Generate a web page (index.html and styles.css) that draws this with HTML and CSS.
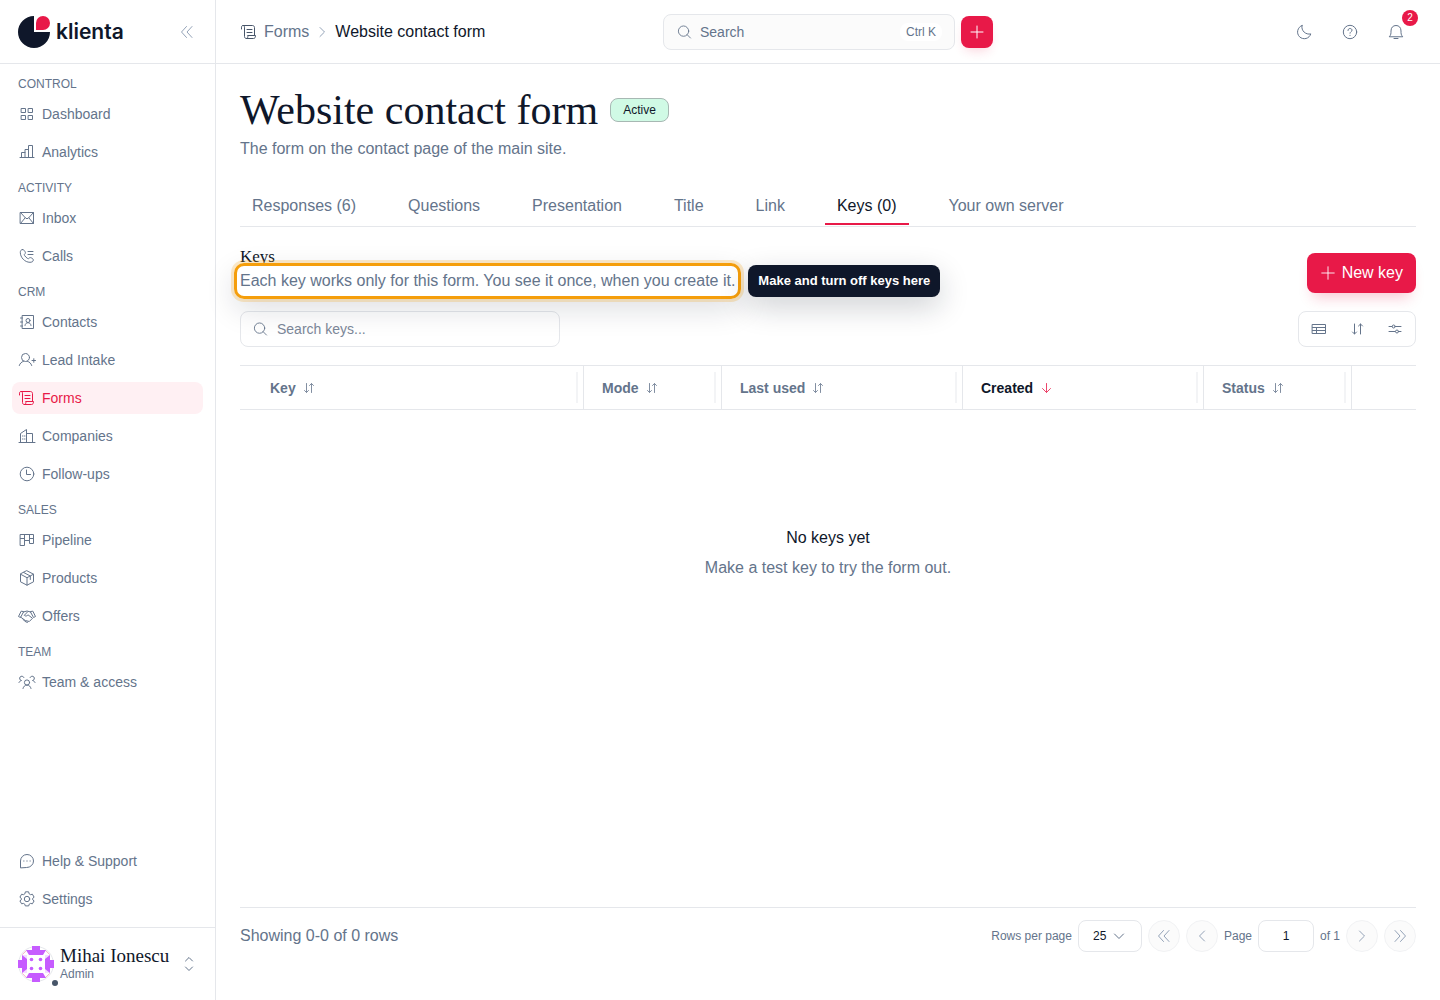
FILE: index.html
```html
<!DOCTYPE html>
<html lang="en">
<head>
<meta charset="utf-8">
<meta name="viewport" content="width=device-width, initial-scale=1">
<title>Website contact form - Klienta</title>
<link rel="stylesheet" href="styles.css">
</head>
<body>
<div class="app">
  <aside class="sidebar">
    <div class="brand">
      <a class="brand-link" href="#">
        <svg class="brand-mark" viewBox="0 0 32 32" aria-hidden="true"><path d="M16 0A16 16 0 1 0 32 16H16Z" fill="#0f172a"/><path d="M18 14V7a7 7 0 1 1 7 7Z" fill="#e81948"/></svg>
        <span class="brand-name">klienta</span>
      </a>
      <button class="icon-button collapse" type="button" aria-label="Collapse sidebar"><svg class="icon" viewBox="0 0 18 18"><path d="M8.500 3.500 3.500 9l5 5.500M14 3.500 9 9l5 5.500"/></svg></button>
    </div>
    <nav class="nav" aria-label="Main">
      <div class="nav-group">
        <h2 class="nav-label">CONTROL</h2>
        <a class="nav-item" href="#"><svg class="icon" viewBox="0 0 18 18"><path d="M3.500 3.500h4v4h-4zM10.500 3.500h4v4h-4zM3.500 10.500h4v4h-4zM10.500 10.500h4v4h-4z"/></svg>Dashboard</a>
        <a class="nav-item" href="#"><svg class="icon" viewBox="0 0 18 18"><path d="M2 14.500h14M3.500 14.500v-5H7M7 14.500V6.500h3.500M10.500 14.500v-12h4v12"/></svg>Analytics</a>
      </div>
      <div class="nav-group">
        <h2 class="nav-label">ACTIVITY</h2>
        <a class="nav-item" href="#"><svg class="icon" viewBox="0 0 18 18"><path d="M2.500 3.500h13v11h-13zM2.500 3.500 7.500 9q1.500 1.500 3 0l5-5.500M2.500 14.500 7 9M15.500 14.500 11 9"/></svg>Inbox</a>
        <a class="nav-item" href="#"><svg class="icon" viewBox="0 0 18 18"><path d="M4.500 2.500C3 2.500 2.300 4 2.300 5.300c0 5.200 4.500 10 9.700 10 1.600 0 3.300-.6 3.300-2.200 0-1.500-1.600-2.200-2.800-2.500-1-.2-1.300.8-2.100 1.100C9.500 12 6 8.500 6.300 7.600c.3-.8 1.300-1 1.100-2C7.100 4.300 6 2.500 4.500 2.500ZM10 4.500h5M10 7.500h5"/></svg>Calls</a>
      </div>
      <div class="nav-group">
        <h2 class="nav-label">CRM</h2>
        <a class="nav-item" href="#"><svg class="icon" viewBox="0 0 18 18"><path d="M4.500 2.500h11v13h-11zM2.500 5h2M2.500 9h2M2.500 13h2"/><circle cx="10" cy="7.500" r="2"/><path d="M7 12.500c.2-1.700 1.300-2.800 3-2.800s2.800 1.100 3 2.800"/></svg>Contacts</a>
        <a class="nav-item" href="#"><svg class="icon" viewBox="0 0 18 18"><circle cx="7.500" cy="6.500" r="4"/><path d="M1.300 14.500c.7-2.300 2.200-3.500 4.200-4.200M9.500 10.300c2 .7 3.500 1.900 4.200 4.200M14 9.500h3.500M15.800 7.700v3.600"/></svg>Lead Intake</a>
        <a class="nav-item is-active" href="#" aria-current="page"><svg class="icon" viewBox="0 0 18 18"><path d="M1.500 6V4.200c0-2.300 3-2.300 3 0v9.300c0 1.300.7 2 1.800 2M3 2.500h9.500c1 0 2 .8 2 2v8M8 12.500h7.500c0 2-.7 3-2 3H6.300c1.200 0 1.700-1.200 1.700-3M7 6.500h5M7 9.500h5"/></svg>Forms</a>
        <a class="nav-item" href="#"><svg class="icon" viewBox="0 0 18 18"><path d="M1 15.500h16M2.500 15.500v-9l6-4v13M8.500 6.500h6v9M4.500 9h.5M4.500 12h.5M6.500 9H7M6.500 12H7"/></svg>Companies</a>
        <a class="nav-item" href="#"><svg class="icon" viewBox="0 0 18 18"><circle cx="9" cy="9" r="6.800"/><path d="M8.500 5v4.500h4"/></svg>Follow-ups</a>
      </div>
      <div class="nav-group">
        <h2 class="nav-label">SALES</h2>
        <a class="nav-item" href="#"><svg class="icon" viewBox="0 0 18 18"><path d="M2.500 3.500h13v9h-4v-3h-5v5h-4zM6.500 3.500v6M11.500 3.500v6M2.500 7.500h4M11.500 7.500h4"/></svg>Pipeline</a>
        <a class="nav-item" href="#"><svg class="icon" viewBox="0 0 18 18"><path d="m9 1.800 6.500 3.400v7.600L9 16.200l-6.500-3.400V5.200ZM2.500 5.200 9 8.700l6.500-3.500M9 8.700v7.500M5.700 3.500l6.600 3.500v3.500"/></svg>Products</a>
        <a class="nav-item" href="#"><svg class="icon" viewBox="0 0 18 18"><path d="M3 4.500.5 9.500l2 1 3-5.500ZM15 4.500l2.500 5-2 1-3-5.500ZM5.500 5 9 4l3.500 1M9.500 5 6.300 8.300c1.200 1.200 2.700.8 3.700-.5l4.500 3.500-3.200 3.200-4-1-4.800-3.500M5 12.500l3 2.500 1.500.3"/></svg>Offers</a>
      </div>
      <div class="nav-group">
        <h2 class="nav-label">TEAM</h2>
        <a class="nav-item" href="#"><svg class="icon" viewBox="0 0 18 18"><circle cx="9" cy="9.500" r="2.600"/><path d="M5 15.500c.5-2 1.800-3.400 4-3.400s3.500 1.400 4 3.400M1 9.500c.5-1 1.300-1.800 2.500-2a2.200 2.200 0 1 1 2.400-3M17 9.500c-.5-1-1.300-1.800-2.500-2a2.200 2.200 0 1 0-2.400-3"/></svg>Team &amp; access</a>
      </div>
    </nav>
    <nav class="nav-bottom" aria-label="Support">
      <a class="nav-item" href="#"><svg class="icon" viewBox="0 0 18 18"><path d="M2.500 15.500V9A6.500 6.500 0 1 1 9 15.500ZM5.700 9h.3M8.800 9h.4M12 9h.3"/></svg>Help &amp; Support</a>
      <a class="nav-item" href="#"><svg class="icon" viewBox="0 0 18 18"><circle cx="9" cy="9" r="2.700"/><path d="m7.300 2.200-.5 1.700-1.400.8-1.800-.5-1.700 3L3.300 8.300v1.500l-1.400 1.100 1.700 2.900 1.800-.4 1.400.8.500 1.700h3.400l.5-1.700 1.400-.8 1.800.4 1.700-2.900-1.400-1.100V8.300l1.400-1.100-1.700-3-1.800.5-1.400-.8-.5-1.700Z"/></svg>Settings</a>
    </nav>
    <button class="user" type="button">
      <span class="avatar">
        <svg class="avatar-art" viewBox="0 0 36 36" aria-hidden="true"><circle cx="18" cy="18" r="17.500" fill="#fff" stroke="#e5e7eb"/><path d="M4.500 13V8.500l4-4H14M22 4.500h5.500l4 4V13M31.500 23v4.500l-4 4H22M14 31.500H8.500l-4-4V23" fill="none" stroke="#f9b8cc"/><path d="M14 0h8v4h6l-3 5H11L8 4h6zM0 14h4V9h5v18H4v-5H0zM36 14h-4V9h-5v18h5v-5h4zM14 36h8v-4h6l-3-5H11l-3 5h6z" fill="#c65cff"/><path d="M9 9h18v18H9z" fill="#fff"/><path d="m4 9 5 4V9zM32 9l-5 4V9zM4 27l5-4v4zM32 27l-5-4v4z" fill="#fff" opacity=".8"/><g fill="#c65cff"><circle cx="13.500" cy="13.500" r="1.800"/><circle cx="22.500" cy="13.500" r="1.800"/><circle cx="13.500" cy="22.500" r="1.800"/><circle cx="22.500" cy="22.500" r="1.800"/></g></svg>
        <span class="presence"></span>
      </span>
      <span class="user-text"><span class="user-name">Mihai Ionescu</span><span class="user-role">Admin</span></span>
      <svg class="icon" viewBox="0 0 18 18"><path d="M5.500 6 9 2.500 12.500 6M5.500 12 9 15.500l3.500-3.500"/></svg>
    </button>
  </aside>

  <div class="page">
    <header class="topbar">
      <nav class="breadcrumb" aria-label="Breadcrumb">
        <svg class="icon" viewBox="0 0 18 18"><path d="M1.500 6V4.200c0-2.300 3-2.300 3 0v9.300c0 1.300.7 2 1.800 2M3 2.500h9.500c1 0 2 .8 2 2v8M8 12.500h7.500c0 2-.7 3-2 3H6.300c1.200 0 1.700-1.200 1.700-3M7 6.500h5M7 9.500h5"/></svg>
        <a class="crumb" href="#">Forms</a>
        <svg class="icon crumb-sep" viewBox="0 0 14 18"><path d="m5 4.500 4.500 4.500L5 13.500"/></svg>
        <span class="crumb-current">Website contact form</span>
      </nav>
      <div class="quick">
        <button class="search-trigger" type="button"><svg class="icon icon-search" viewBox="0 0 18 18"><circle cx="8.500" cy="8" r="5.800"/><path d="m12.500 12 3.800 3.800"/></svg><span>Search</span><kbd class="shortcut">Ctrl K</kbd></button>
        <button class="add" type="button" aria-label="Create"><svg class="icon" viewBox="0 0 18 18"><path d="M9 3v12M3 9h12"/></svg></button>
      </div>
      <div class="tools">
        <button class="icon-button" type="button" aria-label="Dark mode"><svg class="icon" viewBox="0 0 18 18"><path d="M7 2.500a6.800 6.800 0 1 0 8.800 8.400C11 12 5.800 8 7 2.500Z"/></svg></button>
        <button class="icon-button" type="button" aria-label="Help"><svg class="icon" viewBox="0 0 18 18"><circle cx="9" cy="9" r="6.700"/><path d="M7 7.500c0-1.200.8-2 2-2s2 .7 2 1.700c0 1.500-2 1.500-2 3M9 12.300v.2"/></svg></button>
        <button class="icon-button" type="button" aria-label="Notifications, 2 unread"><svg class="icon" viewBox="0 0 18 18"><path d="M2.500 13.500c1.500-1.500 1.500-3 1.500-5.500C4 4.500 6 2.500 9 2.500s5 2 5 5.500c0 2.500 0 4 1.500 5.500ZM7 15.500h4"/></svg><span class="count">2</span></button>
      </div>
    </header>

    <main class="content">
      <div class="title-row"><h1 class="title">Website contact form</h1><span class="badge">Active</span></div>
      <p class="subtitle">The form on the contact page of the main site.</p>
      <nav class="tabs" aria-label="Form sections">
        <a class="tab" href="#">Responses (6)</a>
        <a class="tab" href="#">Questions</a>
        <a class="tab" href="#">Presentation</a>
        <a class="tab" href="#">Title</a>
        <a class="tab" href="#">Link</a>
        <a class="tab is-current" href="#" aria-current="page">Keys (0)</a>
        <a class="tab" href="#">Your own server</a>
      </nav>

      <section class="section-head">
        <div>
          <h2 class="section-title">Keys</h2>
          <p class="section-note">Each key works only for this form. You see it once, when you create it.<span class="spotlight"></span><span class="hint" role="tooltip">Make and turn off keys here</span></p>
        </div>
        <button class="primary" type="button"><svg class="icon icon-small" viewBox="0 0 18 18"><path d="M9 2v14M2 9h14"/></svg>New key</button>
      </section>

      <div class="toolbar">
        <label class="filter"><svg class="icon icon-search" viewBox="0 0 18 18"><circle cx="8.500" cy="8" r="5.800"/><path d="m12.500 12 3.800 3.800"/></svg><input class="filter-input" type="text" placeholder="Search keys..." aria-label="Search keys"></label>
        <div class="view-tools">
          <button class="view-button" type="button" aria-label="Table view"><svg class="icon" viewBox="0 0 18 18"><path d="M2.500 4.500h13v9h-13zM2.500 7.500h13M2.500 10.500h13M6.500 7.500v6"/></svg></button>
          <button class="view-button" type="button" aria-label="Sort"><svg class="icon" viewBox="0 0 18 18"><path d="M6.500 4v10M4.500 12l2 2 2-2M12.500 14V4M10.500 6l2-2 2 2"/></svg></button>
          <button class="view-button" type="button" aria-label="Columns"><svg class="icon" viewBox="0 0 18 18"><path d="M3 6.500h3M9.500 6.500H15M3 11.500h6M12.500 11.500H15"/><circle cx="7.700" cy="6.500" r="1.500"/><circle cx="11" cy="11.500" r="1.500"/></svg></button>
        </div>
      </div>

      <table class="grid">
        <colgroup><col class="col-key"><col class="col-mode"><col class="col-date"><col class="col-date"><col class="col-status"><col class="col-actions"></colgroup>
        <thead>
          <tr>
            <th class="first" scope="col"><button class="sort" type="button">Key<svg class="icon" viewBox="0 0 14 14"><path d="M4.500 2.500v9M2.500 9.500l2 2 2-2M9.500 11.500v-9M7.500 4.500l2-2 2 2"/></svg></button></th>
            <th scope="col"><button class="sort" type="button">Mode<svg class="icon" viewBox="0 0 14 14"><path d="M4.500 2.500v9M2.500 9.500l2 2 2-2M9.500 11.500v-9M7.500 4.500l2-2 2 2"/></svg></button></th>
            <th scope="col"><button class="sort" type="button">Last used<svg class="icon" viewBox="0 0 14 14"><path d="M4.500 2.500v9M2.500 9.500l2 2 2-2M9.500 11.500v-9M7.500 4.500l2-2 2 2"/></svg></button></th>
            <th scope="col" aria-sort="descending"><button class="sort is-sorted" type="button">Created<svg class="icon" viewBox="0 0 14 14"><path d="M7.500 2.500v9M3.500 7.500l4 4 4-4"/></svg></button></th>
            <th scope="col"><button class="sort" type="button">Status<svg class="icon" viewBox="0 0 14 14"><path d="M4.500 2.500v9M2.500 9.500l2 2 2-2M9.500 11.500v-9M7.500 4.500l2-2 2 2"/></svg></button></th>
            <td class="last"></td>
          </tr>
        </thead>
      </table>
      <div class="empty">
        <p class="empty-title">No keys yet</p>
        <p class="empty-note">Make a test key to try the form out.</p>
      </div>

      <footer class="pager">
        <span class="summary">Showing 0-0 of 0 rows</span>
        <div class="pager-controls">
          <label for="rows">Rows per page</label>
          <span class="select-wrap"><select class="rows" id="rows"><option>25</option><option>50</option></select><svg class="icon select-arrow" viewBox="0 0 14 14"><path d="M2.500 5 7 9.500 11.500 5"/></svg></span>
          <button class="round" type="button" disabled aria-label="First page"><svg class="icon" viewBox="0 0 18 18"><path d="M8.500 3.500 3.500 9l5 5.500M14 3.500 9 9l5 5.500"/></svg></button>
          <button class="round" type="button" disabled aria-label="Previous page"><svg class="icon" viewBox="0 0 18 18"><path d="M11.500 4 6.500 9l5 5"/></svg></button>
          <label for="page-number">Page</label>
          <input class="page-number" id="page-number" type="text" value="1">
          <span>of 1</span>
          <button class="round" type="button" disabled aria-label="Next page"><svg class="icon" viewBox="0 0 18 18"><path d="m6.500 4 5 5-5 5"/></svg></button>
          <button class="round" type="button" disabled aria-label="Last page"><svg class="icon" viewBox="0 0 18 18"><path d="m9.500 3.500 5 5.500-5 5.500M4 3.500 9 9l-5 5.500"/></svg></button>
        </div>
      </footer>
    </main>
  </div>
</div>
</body>
</html>
```
FILE: styles.css
```css
:root {
  --ink: #0f172a;
  --muted: #64748b;
  --line: #e5e7eb;
  --accent: #e81948;
  --serif: "Liberation Serif", serif;
}

* { box-sizing: border-box; }

body {
  margin: 0;
  background: #fff;
  color: var(--muted);
  font: 16px/24px "Liberation Sans", sans-serif;
}

h1, h2, p { margin: 0; font-weight: 400; }
a { color: inherit; text-decoration: none; }
button, input, select { font: inherit; color: inherit; }
button { margin: 0; padding: 0; border: 0; background: none; cursor: pointer; }

.icon {
  width: 18px;
  height: 18px;
  flex: none;
  fill: none;
  stroke: currentColor;
  stroke-width: 1;
  stroke-linecap: round;
  stroke-linejoin: round;
}
.icon-search, .icon-small { width: 16px; height: 16px; }

.app { display: flex; min-height: 100vh; }

/* Sidebar */
.sidebar {
  display: flex;
  flex-direction: column;
  flex: none;
  width: 216px;
  border-right: 1px solid var(--line);
}

.brand {
  display: flex;
  align-items: center;
  justify-content: space-between;
  height: 64px;
  padding: 0 8px 0 18px;
  border-bottom: 1px solid var(--line);
}
.brand-link { display: flex; align-items: center; gap: 6px; }
.brand-mark { width: 32px; height: 32px; }
.brand-name { color: var(--ink); font: 600 21px/32px Inter, sans-serif; }

.icon-button {
  position: relative;
  display: grid;
  place-items: center;
  width: 40px;
  height: 40px;
}
.collapse { color: #94a3b8; }

.nav { flex: 1; display: flex; flex-direction: column; gap: 6px; padding: 6px 12px; }
.nav-group { display: flex; flex-direction: column; gap: 6px; }
.nav-label { margin-bottom: -6px; padding-left: 6px; font-size: 12px; line-height: 28px; }
.nav-item {
  display: flex;
  align-items: center;
  gap: 6px;
  height: 32px;
  padding: 0 6px;
  border-radius: 8px;
  font-size: 14px;
}
.nav-item.is-active { background: #fff0f3; color: var(--accent); }
.nav-bottom { display: flex; flex-direction: column; gap: 6px; padding: 12px; }

.user {
  display: flex;
  align-items: center;
  gap: 6px;
  height: 73px;
  padding: 0 17px 0 18px;
  border-top: 1px solid var(--line);
  text-align: left;
}
.avatar { position: relative; width: 36px; height: 36px; }
.avatar-art { display: block; }
.presence {
  position: absolute;
  right: -4px;
  bottom: -4px;
  width: 6px;
  height: 6px;
  border-radius: 50%;
  background: #475569;
}
.user-text { flex: 1; display: flex; flex-direction: column; }
.user-name { color: var(--ink); font: 19px/20px var(--serif); }
.user-role { font-size: 12px; line-height: 16px; }

/* Top bar */
.page { flex: 1; display: flex; flex-direction: column; min-width: 0; }
.topbar {
  display: grid;
  grid-template-columns: 1fr auto 1fr;
  align-items: center;
  height: 64px;
  padding: 0 24px;
  border-bottom: 1px solid var(--line);
}
.breadcrumb { display: flex; align-items: center; gap: 6px; }
.breadcrumb .icon { color: #475569; }
.breadcrumb .crumb-sep { width: 14px; color: #94a3b8; }
.crumb-current { color: var(--ink); }

.quick { display: flex; align-items: center; gap: 6px; }
.search-trigger {
  display: flex;
  align-items: center;
  gap: 8px;
  width: 292px;
  height: 36px;
  padding: 0 12px;
  border: 1px solid var(--line);
  border-radius: 8px;
  background: #fbfbfb;
  font-size: 14px;
}
.shortcut {
  margin-left: auto;
  padding: 0 6px;
  border-radius: 8px;
  background: #fff;
  font: 12px/18px "Liberation Sans", sans-serif;
}
.add {
  display: grid;
  place-items: center;
  width: 32px;
  height: 32px;
  border-radius: 8px;
  background: var(--accent);
  box-shadow: 0 6px 12px -4px rgba(232, 25, 72, .2);
  color: #fff;
}
.tools { display: flex; justify-content: flex-end; gap: 6px; }
.count {
  position: absolute;
  top: -2px;
  right: -2px;
  width: 16px;
  border-radius: 8px;
  background: var(--accent);
  color: #fff;
  font-size: 10px;
  line-height: 16px;
  text-align: center;
}

/* Content */
.content { flex: 1; display: flex; flex-direction: column; padding: 24px 24px 48px; }
.title-row { display: flex; align-items: center; gap: 12px; }
.title { color: var(--ink); font: 42px/44px var(--serif); }
.badge {
  padding: 0 12px;
  border: 1px solid #a7b8b3;
  border-radius: 8px;
  background: #d0fae5;
  color: var(--ink);
  font-size: 12px;
  line-height: 22px;
}
.subtitle { margin-top: 5px; }

.tabs { display: flex; gap: 28px; margin-top: 24px; padding-bottom: 1px; border-bottom: 1px solid var(--line); }
.tab { padding: 9px 12px 5px; border-bottom: 2px solid transparent; white-space: nowrap; }
.tab.is-current { border-color: var(--accent); color: var(--ink); }

.section-head { display: flex; justify-content: space-between; align-items: flex-end; margin-top: 18px; }
.section-title { color: var(--ink); font: 17px/24px var(--serif); }
.section-note { position: relative; white-space: nowrap; }
.spotlight {
  position: absolute;
  inset: -6px;
  border: 3px solid #f59e0b;
  border-radius: 10px;
  box-shadow: 0 0 0 3px rgba(245, 158, 11, .22), 0 10px 30px rgba(15, 23, 42, .14);
}
.hint {
  position: absolute;
  top: -4px;
  left: calc(100% + 13px);
  padding: 0 10px;
  border-radius: 8px;
  background: var(--ink);
  box-shadow: 0 10px 30px rgba(15, 23, 42, .2);
  color: #fff;
  font-size: 13px;
  font-weight: 700;
  line-height: 32px;
}
.primary {
  display: flex;
  align-items: center;
  gap: 6px;
  height: 40px;
  padding: 0 13px;
  border-radius: 8px;
  background: var(--accent);
  box-shadow: 0 10px 14px -6px rgba(232, 25, 72, .25);
  color: #fff;
}

.toolbar { display: flex; justify-content: space-between; margin-top: 18px; }
.filter {
  display: flex;
  align-items: center;
  gap: 9px;
  width: 320px;
  height: 36px;
  padding: 0 11px;
  border: 1px solid var(--line);
  border-radius: 8px;
  font-size: 14px;
}
.filter-input { flex: 1; min-width: 0; padding: 0; border: 0; outline: 0; background: none; }
.filter-input::placeholder { color: #7c8799; }
.view-tools { display: flex; gap: 6px; height: 36px; padding: 0 4px; border: 1px solid var(--line); border-radius: 8px; }
.view-button { display: grid; place-items: center; width: 32px; }

.grid { width: 100%; margin-top: 18px; border-collapse: separate; border-spacing: 0; table-layout: fixed; }
.col-key { width: 344px; }
.col-mode { width: 138px; }
.col-date { width: 241px; }
.col-status { width: 148px; }
.grid th, .grid td {
  height: 45px;
  padding: 0 5px 0 18px;
  border: solid var(--line);
  border-width: 1px 1px 1px 0;
}
.grid th.first { padding-left: 30px; }
.grid td.last { border-right: 0; }
.sort {
  display: flex;
  align-items: center;
  gap: 6px;
  width: 100%;
  height: 31px;
  border-right: 2px solid #f3f4f6;
  font-size: 14px;
  font-weight: 700;
}
.sort .icon { width: 14px; height: 14px; opacity: .8; }
.sort.is-sorted { color: var(--ink); }
.sort.is-sorted .icon { color: var(--accent); }

.empty { flex: 1; display: flex; flex-direction: column; align-items: center; gap: 6px; padding-top: 116px; }
.empty-title { color: var(--ink); }

.pager {
  display: flex;
  align-items: center;
  justify-content: space-between;
  padding-top: 12px;
  border-top: 1px solid var(--line);
}
.pager-controls { display: flex; align-items: center; gap: 6px; font-size: 12px; }
.select-wrap { position: relative; color: var(--ink); }
.rows {
  display: block;
  width: 64px;
  height: 32px;
  padding: 0 14px;
  border: 1px solid var(--line);
  border-radius: 8px;
  background: #fff;
  appearance: none;
}
.select-arrow { position: absolute; top: 9px; right: 16px; width: 14px; height: 14px; color: var(--muted); pointer-events: none; }
.page-number {
  width: 56px;
  height: 32px;
  border: 1px solid var(--line);
  border-radius: 8px;
  color: var(--ink);
  text-align: center;
}
.round {
  display: grid;
  place-items: center;
  width: 32px;
  height: 32px;
  border: 1px solid #f1f2f4;
  border-radius: 50%;
  background: #fbfbfb;
  color: #94a3b8;
}
```
